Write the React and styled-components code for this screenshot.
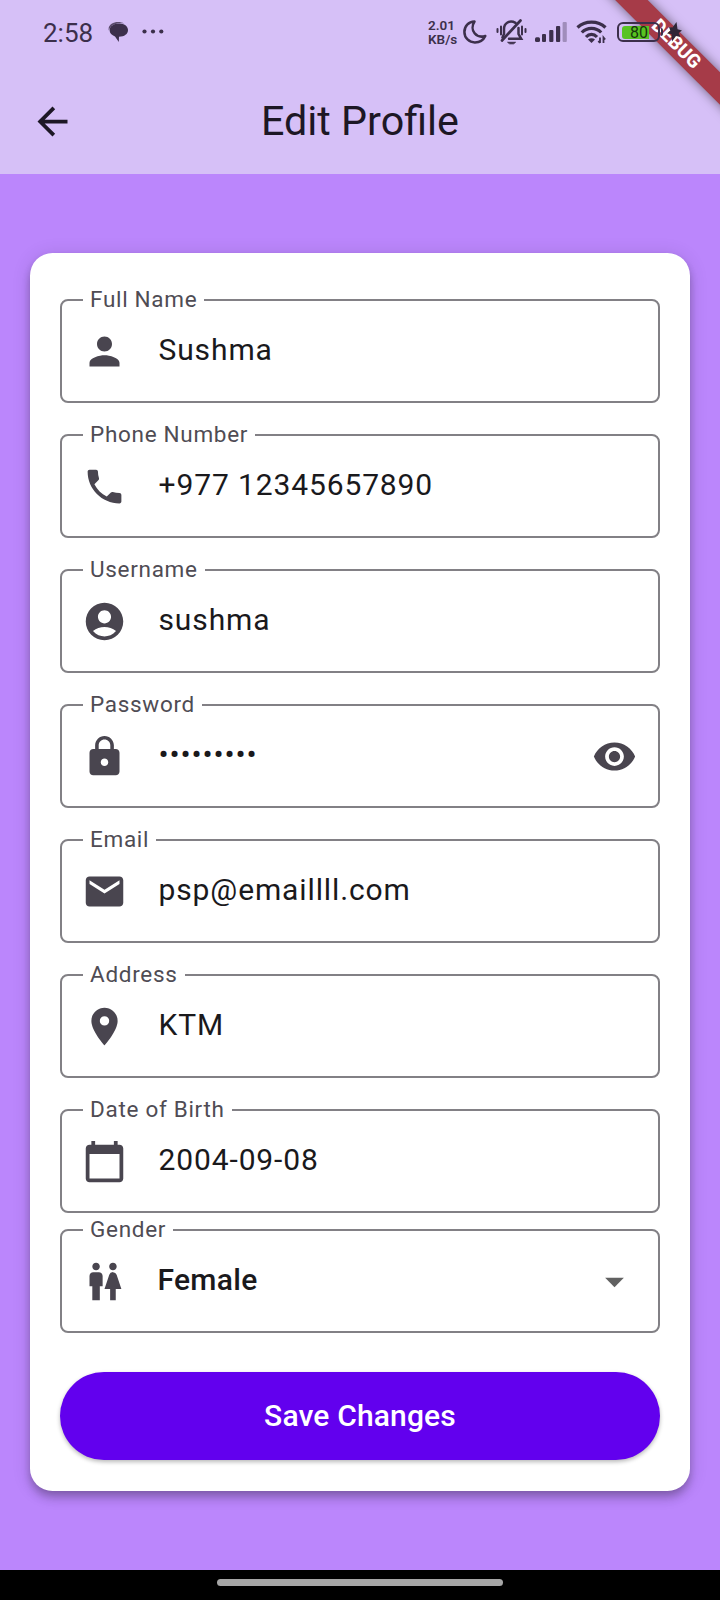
import React from "react";
import styled, { createGlobalStyle } from "styled-components";
import {
  MdPerson,
  MdPhone,
  MdAccountCircle,
  MdLock,
  MdEmail,
  MdLocationOn,
  MdCalendarToday,
  MdWc,
  MdVisibility,
  MdArrowDropDown,
  MdArrowBack,
} from "react-icons/md";

const GlobalStyle = createGlobalStyle`
  * { box-sizing: border-box; }
  body {
    margin: 0;
    font-family: Roboto, "Noto Sans", sans-serif;
    background: #bb86fc;
  }
`;

const Screen = styled.div`
  position: relative;
  display: flex;
  flex-direction: column;
  width: 720px;
  height: 1600px;
  overflow: hidden;
  background: #bb86fc;
`;

const Header = styled.header`
  position: relative;
  height: 174px;
  background: #d6c0f7;
`;

const StatusBar = styled.div`
  position: relative;
  z-index: 2;
  display: flex;
  align-items: center;
  height: 64px;
  padding: 0 38px 0 43px;
  color: #3c2f4b;
`;

const Clock = styled.span`
  width: 64px;
  font-size: 26px;
  font-weight: 450;
  line-height: 30px;
  padding-top: 1px;
`;

const StatusIcons = styled.div`
  display: flex;
  align-items: center;
  margin-left: auto;
`;

const NetSpeed = styled.span`
  display: flex;
  flex-direction: column;
  width: 36px;
  padding-left: 1px;
  font-size: 13.5px;
  font-weight: 600;
  line-height: 14px;
`;

const Glyph = styled.svg`
  display: block;
  flex: none;
  margin-left: ${(p) => p.$gap || 0}px;
`;

const Battery = styled.span`
  position: relative;
  display: flex;
  align-items: center;
  width: 43px;
  height: 20px;
  margin-left: 10px;
  padding: 2px 3px;
  border: 2px solid #3c2f4b;
  border-radius: 6px;
`;

const BatteryLevel = styled.span`
  display: flex;
  align-items: center;
  justify-content: flex-end;
  width: 27px;
  height: 13px;
  padding-right: 1px;
  border-radius: 3px 0 0 3px;
  background: #58c322;
  color: #17330e;
  font-size: 16px;
  line-height: 13px;
`;

const BatteryTip = styled.span`
  width: 2px;
  height: 8px;
  margin-left: 1px;
  border-radius: 0 2px 2px 0;
  background: #3c2f4b;
`;

const DebugBanner = styled.div`
  position: absolute;
  z-index: 1;
  top: 33.25px;
  left: 575.5px;
  display: flex;
  align-items: center;
  justify-content: center;
  width: 200px;
  height: 22.5px;
  transform: rotate(45deg);
  background: #a63b48;
  box-shadow: 0 0 11px rgba(0, 0, 0, 0.5);
  color: #fff;
  font-size: 19px;
  font-weight: 800;
  line-height: 22px;
`;

const AppBar = styled.div`
  display: grid;
  grid-template-columns: 105px 1fr 105px;
  align-items: center;
  height: 110px;
  padding-top: 4px;
  color: #1d1725;
`;

const BackButton = styled.span`
  display: flex;
  justify-content: center;
  svg {
    width: 45px;
    height: 45px;
  }
`;

const Title = styled.h1`
  margin: 0;
  padding-bottom: 1px;
  font-size: 41.25px;
  font-weight: 400;
  line-height: 52px;
  text-align: center;
`;

const Content = styled.main`
  flex: 1;
  padding: 79px 30px 0;
`;

const Card = styled.form`
  display: flex;
  flex-direction: column;
  height: 1238px;
  padding: 46px 30px 0;
  border-radius: 22.5px;
  background: #fff;
  box-shadow:
    0 4px 8px -2px rgba(0, 0, 0, 0.2),
    0 8px 10px 0 rgba(0, 0, 0, 0.14),
    0 2px 19px 0 rgba(0, 0, 0, 0.12);
`;

const Fields = styled.div`
  display: flex;
  flex-direction: column;
  gap: 31px;
`;

const Outline = styled.fieldset`
  min-width: 0;
  height: 104px;
  margin: ${(p) => (p.$tight ? "-15px" : "0")} 0 0;
  padding: 0 21px 0 20px;
  border: 2px solid #828085;
  border-radius: 8px;
`;

const Label = styled.legend`
  height: 2px;
  margin-left: 1px;
  padding: 0 7px;
  color: #4f4c54;
  font-size: 22.5px;
  letter-spacing: 0.7px;
  line-height: 0;
`;

const FieldRow = styled.div`
  display: flex;
  align-items: center;
  height: 100px;
  color: #49454f;
  > svg {
    flex: none;
    width: 45px;
    height: 45px;
  }
`;

const Value = styled.span`
  flex: 1;
  padding: 0 0 3px ${(p) => (p.$strong ? "30.5px" : "31.5px")};
  color: #1a191c;
  font-size: 30px;
  font-weight: ${(p) => (p.$strong ? 500 : 400)};
  letter-spacing: ${(p) => (p.$strong ? "0.28px" : "0.88px")};
  line-height: 45px;
`;

const DropdownMark = styled.span`
  display: flex;
  color: #616161;
  svg {
    width: 45px;
    height: 45px;
  }
`;

const SaveButton = styled.button`
  height: 88px;
  margin-top: 39px;
  padding: 0 0 2px;
  border: 0;
  border-radius: 44px;
  background: #6200ee;
  box-shadow: 0 2px 4px rgba(0, 0, 0, 0.28);
  color: #fff;
  font-family: inherit;
  font-size: 30px;
  font-weight: 500;
  letter-spacing: 0.15px;
`;

const NavigationBar = styled.footer`
  display: flex;
  justify-content: center;
  height: 30px;
  padding-top: 9px;
  background: #000;
`;

const HomeHandle = styled.span`
  width: 286px;
  height: 7px;
  border-radius: 4px;
  background: #a6a6a6;
`;

const fields = [
  { label: "Full Name", value: "Sushma", Icon: MdPerson },
  { label: "Phone Number", value: "+977 12345657890", Icon: MdPhone },
  { label: "Username", value: "sushma", Icon: MdAccountCircle },
  { label: "Password", value: "•••••••••", Icon: MdLock, end: <MdVisibility /> },
  { label: "Email", value: "psp@emaillll.com", Icon: MdEmail },
  { label: "Address", value: "KTM", Icon: MdLocationOn },
  { label: "Date of Birth", value: "2004-09-08", Icon: MdCalendarToday },
  {
    label: "Gender",
    value: "Female",
    Icon: MdWc,
    end: (
      <DropdownMark>
        <MdArrowDropDown />
      </DropdownMark>
    ),
    tight: true,
    strong: true,
  },
];

function Field({ label, value, Icon, end, tight, strong }) {
  return (
    <Outline $tight={tight}>
      <Label>{label}</Label>
      <FieldRow>
        <Icon />
        <Value $strong={strong}>{value}</Value>
        {end}
      </FieldRow>
    </Outline>
  );
}

function ChatGlyph() {
  return (
    <Glyph width="20" height="20" viewBox="0 0 20 20" $gap={1}>
      <path d="M.8 8.500C-.5 3 5 0 10 0c2.500 0 4.500.5 6 1.500C8 .6 2.500 3 .8 8.500z" fill="#5b4c6c" />
      <path
        d="M11 1.600c5.200 0 9 2.800 9 6.500 0 4-3.600 6.700-9 6.700l-.2 5.200-3.800-5.600C3.700 13.300 1.600 11.200 1.600 8.300c0-3.900 4.200-6.700 9.400-6.700z"
        fill="currentColor"
      />
    </Glyph>
  );
}

function DotsGlyph() {
  return (
    <Glyph width="22" height="6" viewBox="0 0 22 6" $gap={14} fill="currentColor">
      <circle cx="2.500" cy="2.500" r="2.100" />
      <circle cx="11" cy="2.500" r="2.100" />
      <circle cx="19.300" cy="2.500" r="2.100" />
    </Glyph>
  );
}

function MoonGlyph() {
  return (
    <Glyph width="24" height="24" viewBox="0 0 24 24" fill="none">
      <path
        d="M11.500 1.500C5.500 1.800 1.400 6.300 1.400 12a10.400 10.400 0 0 0 10.600 10.400c4.500 0 8.600-2.700 10.300-6.400-4 1.200-8.300.3-10.700-2.700-2.600-3.200-2.600-8 -.1-11.800z"
        stroke="currentColor"
        strokeWidth="2.500"
        strokeLinejoin="round"
      />
    </Glyph>
  );
}

function MutedBellGlyph() {
  return (
    <Glyph
      width="31"
      height="26"
      viewBox="0 0 31 26"
      $gap={9}
      fill="none"
      stroke="currentColor"
      strokeWidth="2"
      strokeLinecap="round"
    >
      <path d="M1.500 10v3M5 7.500v8M29.500 10v3M26 7.500v8" />
      <path d="M19.500 3.800C13.500.5 8 4.300 8 10v5l-1.500 3.500M22.500 9v6l2.700 4.800H13" strokeWidth="2.500" />
      <path d="M24.500 1.500 6 21.500" strokeWidth="2.700" />
      <path d="M12 23.300h7.500l-2 1.500h-3.500z" fill="currentColor" strokeWidth="1" />
    </Glyph>
  );
}

function SignalGlyph() {
  return (
    <Glyph width="32" height="20" viewBox="0 0 32 20" $gap={8} fill="currentColor">
      <rect x="0" y="15.300" width="5" height="4.700" rx="1.500" />
      <rect x="7" y="12" width="4" height="8" rx="1" />
      <rect x="14.200" y="8" width="4.200" height="12" rx="1" />
      <rect x="21" y="4" width="4.200" height="16" rx="1" />
      <rect x="27.600" y="0" width="4.200" height="20" rx="1" opacity=".35" />
    </Glyph>
  );
}

function WifiGlyph() {
  return (
    <Glyph width="31" height="24" viewBox="0 0 31 24" $gap={9} fill="none">
      <g stroke="currentColor" strokeWidth="3.200">
        <path d="M1.500 7.500C9 .2 22 .2 29.500 7.500" />
        <path d="M5.800 12.500c5.400-5.500 14-5.500 19.400 0" />
        <path d="M10 17c3.200-3.400 7.800-3.400 11 0" />
      </g>
      <path d="M12 19.500c2-1.800 5-1.800 7 0L15.500 23z" fill="currentColor" />
      <path d="M24 17.500V23m-1.700-2L24 23M27.500 23v-5.500l1.700 2" stroke="currentColor" strokeWidth="1.800" />
    </Glyph>
  );
}

function BoltGlyph() {
  return (
    <Glyph width="15" height="20" viewBox="0 0 15 20" $gap={4}>
      <path
        d="M9.500 0 5.500 5.500 2 5l1.300 3.800L0 11.500l4.500.5L5 19.500l4-5.500 4.500 1-1.800-4L15 8.500 10.500 7.300z"
        fill="#2f2637"
      />
    </Glyph>
  );
}

export default function App() {
  return (
    <Screen>
      <GlobalStyle />
      <Header>
        <StatusBar>
          <Clock>2:58</Clock>
          <ChatGlyph />
          <DotsGlyph />
          <StatusIcons>
            <NetSpeed>
              <span>2.01</span>
              <span>KB/s</span>
            </NetSpeed>
            <MoonGlyph />
            <MutedBellGlyph />
            <SignalGlyph />
            <WifiGlyph />
            <Battery>
              <BatteryLevel>80</BatteryLevel>
            </Battery>
            <BatteryTip />
            <BoltGlyph />
          </StatusIcons>
        </StatusBar>
        <DebugBanner>DEBUG</DebugBanner>
        <AppBar>
          <BackButton>
            <MdArrowBack />
          </BackButton>
          <Title>Edit Profile</Title>
        </AppBar>
      </Header>
      <Content>
        <Card>
          <Fields>
            {fields.map((field) => (
              <Field key={field.label} {...field} />
            ))}
          </Fields>
          <SaveButton type="button">Save Changes</SaveButton>
        </Card>
      </Content>
      <NavigationBar>
        <HomeHandle />
      </NavigationBar>
    </Screen>
  );
}
